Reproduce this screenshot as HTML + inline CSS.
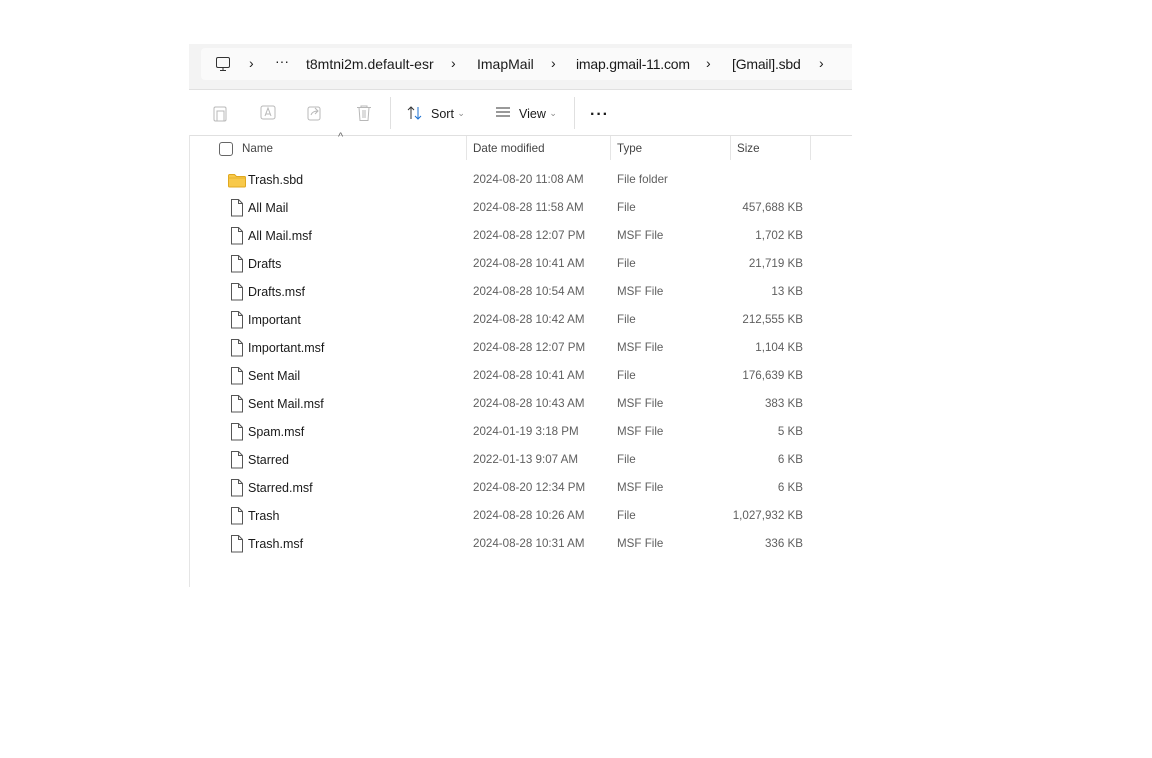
<!DOCTYPE html>
<html><head><style>
body{margin:0;width:1152px;height:758px;background:#fff;font-family:"Liberation Sans",sans-serif;position:relative;overflow:hidden}
.a{position:absolute;white-space:nowrap}
.t{font-size:12.5px;color:#1a1a1a}
.g{font-size:11.6px;color:#5f5f5f}
.r{font-size:11.6px;color:#5f5f5f;text-align:right;width:80px}
</style></head><body>
<div class="a" style="left:189px;top:44px;width:663px;height:45px;background:#f3f3f3;border-bottom:1px solid #e0e0e0"></div>
<div class="a" style="left:201px;top:48px;width:651px;height:32px;background:#fafafa;border-radius:4px 0 0 4px"></div>
<svg class="a" style="left:214px;top:55px" width="18" height="18" viewBox="0 0 18 18"><rect x="2.5" y="2.5" width="13" height="10" rx="1.5" fill="none" stroke="#333"/><path d="M6 15.5h6M9 12.5v3" stroke="#333"/></svg>
<div class="a t" style="left:249px;top:55px;font-size:14px">›</div>
<div class="a t" style="left:275px;top:53px;font-size:14px">···</div>
<div class="a t" style="left:306px;top:56px;font-size:14px">t8mtni2m.default-esr</div>
<div class="a t" style="left:451px;top:55px;font-size:14px">›</div>
<div class="a t" style="left:477px;top:56px;font-size:14px">ImapMail</div>
<div class="a t" style="left:551px;top:55px;font-size:14px">›</div>
<div class="a t" style="left:576px;top:56px;font-size:14px;letter-spacing:-0.2px">imap.gmail-11.com</div>
<div class="a t" style="left:706px;top:55px;font-size:14px">›</div>
<div class="a t" style="left:732px;top:56px;font-size:14px;letter-spacing:-0.2px">[Gmail].sbd</div>
<div class="a t" style="left:819px;top:55px;font-size:14px">›</div>
<svg class="a" style="left:211px;top:104px" width="110" height="18"><g fill="none" stroke="#b8b8b8"><rect x="3" y="3" width="12" height="14" rx="1.5"/><rect x="6" y="7" width="7" height="10"/><rect x="50" y="2" width="14" height="13" rx="2"/><path d="M54 12l3-8 3 8M55 10h4"/><rect x="97" y="3" width="12" height="13" rx="2"/><path d="M100 11c1-3 4-4 7-4M104 4l3 3-3 3"/></g></svg>
<svg class="a" style="left:355px;top:104px" width="18" height="18"><g fill="none" stroke="#b8b8b8"><path d="M2 3.5h14M6 3.5V2h6v1.5M4 3.5l1 13h8l1-13M8 6v8M10 6v8"/></g></svg>
<div class="a" style="left:390px;top:97px;width:1px;height:32px;background:#e0e0e0"></div>
<svg class="a" style="left:406px;top:105px" width="18" height="16"><path d="M5 14V2M2 5l3-3 3 3" fill="none" stroke="#333"/><path d="M12 2v12M9 11l3 3 3-3" fill="none" stroke="#1a6fd0"/></svg>
<div class="a t" style="left:431px;top:107px;font-size:12.5px">Sort <span style="color:#888;font-size:9px;vertical-align:2px">⌄</span></div>
<svg class="a" style="left:495px;top:106px" width="16" height="14"><path d="M1 2h14M1 6h14M1 10h14" stroke="#333"/></svg>
<div class="a t" style="left:519px;top:107px;font-size:12.5px">View <span style="color:#888;font-size:9px;vertical-align:2px">⌄</span></div>
<div class="a" style="left:574px;top:97px;width:1px;height:32px;background:#e0e0e0"></div>
<div class="a t" style="left:590px;top:106px;font-size:16px;font-weight:bold;letter-spacing:1px">···</div>
<div class="a" style="left:189px;top:135px;width:663px;height:1px;background:#e0e0e0"></div>
<div class="a" style="left:189px;top:135px;width:1px;height:452px;background:#e5e5e5"></div>
<div class="a" style="left:219px;top:142px;width:12px;height:12px;border:1px solid #666;border-radius:3px"></div>
<div class="a t" style="left:338px;top:131px;font-size:11px;color:#666">^</div>
<div class="a g" style="left:242px;top:142px;color:#444">Name</div>
<div class="a" style="left:466px;top:136px;width:1px;height:24px;background:#e5e5e5"></div>
<div class="a g" style="left:473px;top:142px;color:#444">Date modified</div>
<div class="a" style="left:610px;top:136px;width:1px;height:24px;background:#e5e5e5"></div>
<div class="a g" style="left:617px;top:142px;color:#444">Type</div>
<div class="a" style="left:730px;top:136px;width:1px;height:24px;background:#e5e5e5"></div>
<div class="a g" style="left:737px;top:142px;color:#444">Size</div>
<div class="a" style="left:810px;top:136px;width:1px;height:24px;background:#e5e5e5"></div>
<div id="rows"></div>
<script>
var d=[["Trash.sbd","2024-08-20 11:08 AM","File folder",""],["All Mail","2024-08-28 11:58 AM","File","457,688 KB"],["All Mail.msf","2024-08-28 12:07 PM","MSF File","1,702 KB"],["Drafts","2024-08-28 10:41 AM","File","21,719 KB"],["Drafts.msf","2024-08-28 10:54 AM","MSF File","13 KB"],["Important","2024-08-28 10:42 AM","File","212,555 KB"],["Important.msf","2024-08-28 12:07 PM","MSF File","1,104 KB"],["Sent Mail","2024-08-28 10:41 AM","File","176,639 KB"],["Sent Mail.msf","2024-08-28 10:43 AM","MSF File","383 KB"],["Spam.msf","2024-01-19 3:18 PM","MSF File","5 KB"],["Starred","2022-01-13 9:07 AM","File","6 KB"],["Starred.msf","2024-08-20 12:34 PM","MSF File","6 KB"],["Trash","2024-08-28 10:26 AM","File","1,027,932 KB"],["Trash.msf","2024-08-28 10:31 AM","MSF File","336 KB"]];
var h="";d.forEach(function(r,i){var y=173+i*28;
var ic=i==0?'<svg class="a" style="left:228px;top:'+(y-1)+'px" width="18" height="16"><path d="M0.5 3.5a1 1 0 0 1 1-1h5l2 2h8a1 1 0 0 1 1 1v8.5a1 1 0 0 1-1 1h-15a1 1 0 0 1-1-1z" fill="#f8c94a" stroke="#e0a820"/><path d="M0.5 6h17" stroke="#e8b32a"/></svg>':'<svg class="a" style="left:229px;top:'+(y-3)+'px" width="16" height="20"><path d="M2.5 1.5h7l4 4v12.5h-11z M9.5 1.5v4h4" fill="#fff" stroke="#555"/></svg>';
h+=ic+'<div class="a t" style="left:248px;top:'+y+'px">'+r[0]+'</div><div class="a g" style="left:473px;top:'+y+'px">'+r[1]+'</div><div class="a g" style="left:617px;top:'+y+'px">'+r[2]+'</div><div class="a r" style="left:723px;top:'+y+'px">'+r[3]+'</div>';});
document.getElementById("rows").innerHTML=h;
</script>
</body></html>
